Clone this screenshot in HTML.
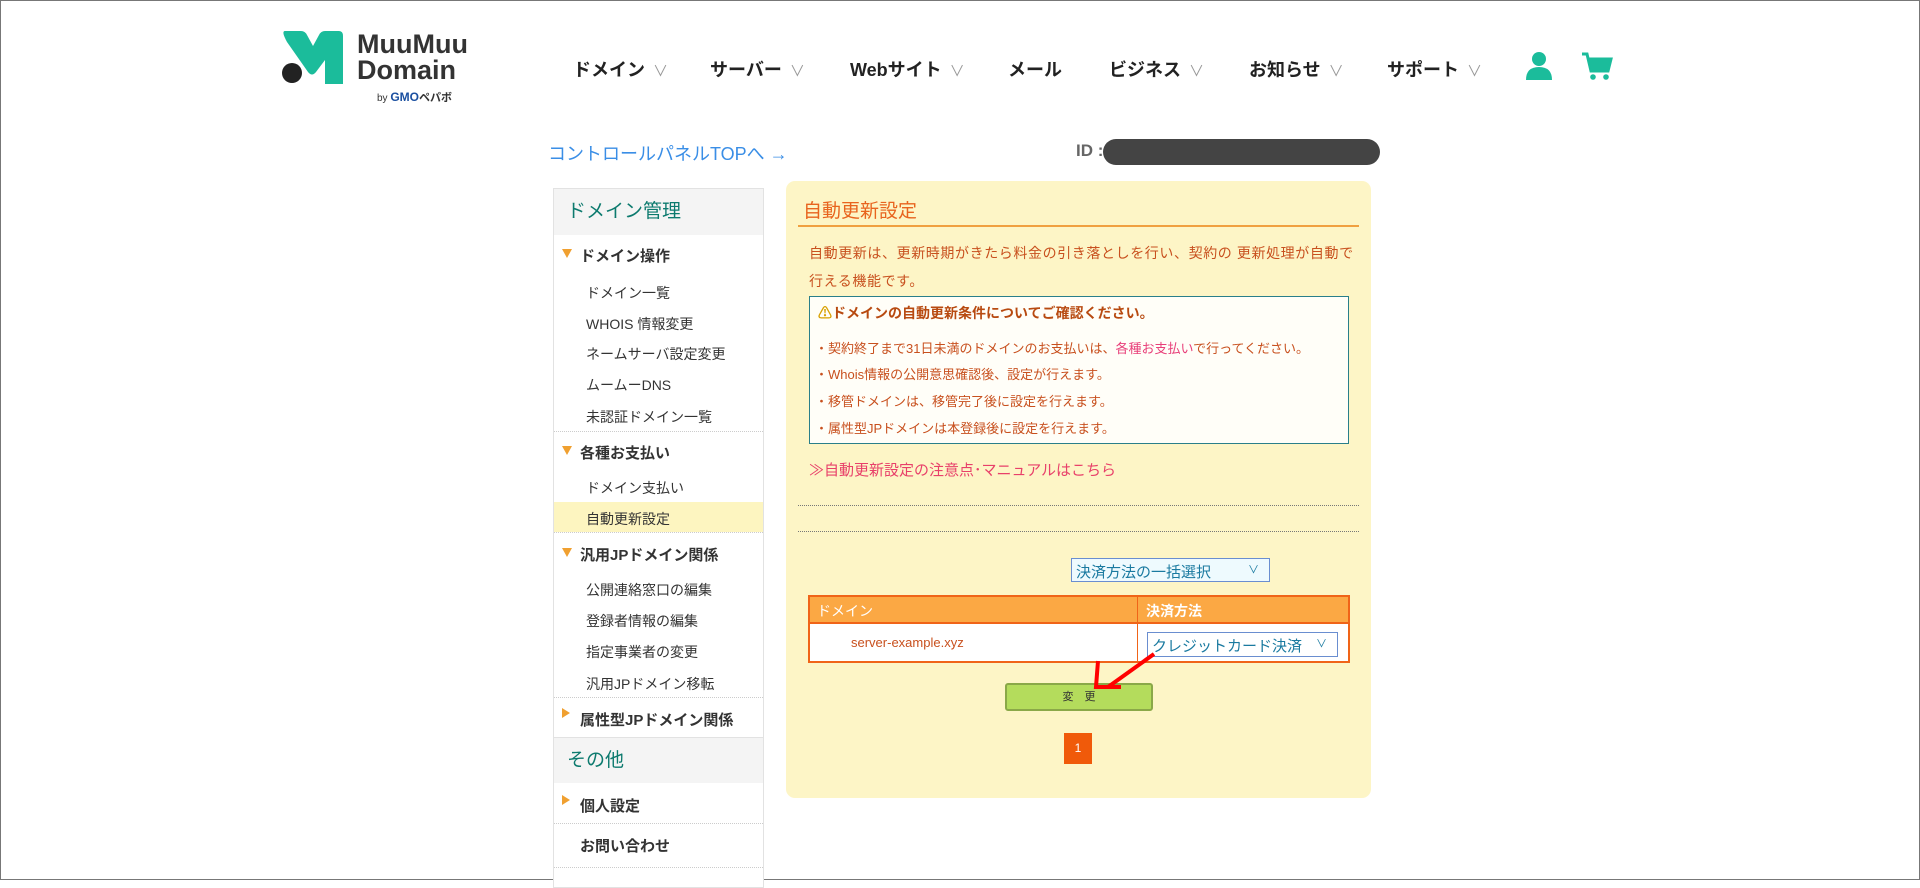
<!DOCTYPE html>
<html><head><meta charset="utf-8"><style>
*{margin:0;padding:0;box-sizing:border-box}
body{width:1920px;height:880px;background:#fff;font-family:"Liberation Sans","Noto Sans CJK JP",sans-serif;position:relative;overflow:hidden;border:1px solid #777}
.a{position:absolute;white-space:nowrap}
.nav{top:55px;font-size:18px;font-weight:bold;color:#222}
.nav i{font-style:normal;color:#999;font-weight:normal;font-size:15px;margin-left:8px}
.sb{position:absolute;left:552px;top:187px;width:211px;height:700px;border:1px solid #e2e2e2;background:#fff}
.sh{position:absolute;left:0;width:209px;background:#f4f4f4;color:#0c7a6e;font-size:19px;padding-left:13px}
.st{position:absolute;left:26px;font-size:15px;font-weight:bold;color:#333}
.tri{position:absolute;left:8px;width:0;height:0}
.si{position:absolute;left:32px;font-size:14px;color:#333}
.sep{position:absolute;left:0;width:209px;border-top:1px dotted #ccc}
.p{font-size:13px;color:#c8501e}
</style></head><body>
<svg class="a" style="left:278px;top:29px" width="66" height="56" viewBox="0 0 66 56"><path d="M6 1 L22 1 Q26 1 28 5 L34 16 L40 5 Q42 1 46 1 L60 1 Q64 1 64 6 L64 54 L46 54 L46 30 L37 42 Q33 47 29 42 L8 12 Q2 1 6 1Z" fill="#1bbc9b"/><circle cx="13" cy="43" r="10" fill="#222"/></svg>
<div class="a" style="left:356px;top:30px;font-size:27px;font-weight:bold;color:#333;line-height:26px">MuuMuu<br>Domain</div>
<div class="a" style="left:376px;top:88px;font-size:10px;color:#333">by <b style="color:#1a4fa0;font-size:12px">GMO</b><b style="font-size:11px">ペパボ</b></div>
<div class="a nav" style="left:572px">ドメイン<i>∨</i></div>
<div class="a nav" style="left:709px">サーバー<i>∨</i></div>
<div class="a nav" style="left:849px">Webサイト<i>∨</i></div>
<div class="a nav" style="left:1007px">メール</div>
<div class="a nav" style="left:1108px">ビジネス<i>∨</i></div>
<div class="a nav" style="left:1248px">お知らせ<i>∨</i></div>
<div class="a nav" style="left:1386px">サポート<i>∨</i></div>
<svg class="a" style="left:1524px;top:50px" width="28" height="30" viewBox="0 0 28 30"><circle cx="14" cy="8" r="7" fill="#1bbc9b"/><path d="M1 29 Q1 16 14 16 Q27 16 27 29Z" fill="#1bbc9b"/></svg>
<svg class="a" style="left:1580px;top:50px" width="32" height="32" viewBox="0 0 32 32"><path d="M1 3 L6 3 L10 20 L27 20 L30 8 L8 8" fill="none" stroke="#1bbc9b" stroke-width="3"/><path d="M8 9 L29 9 L26 19 L10 19Z" fill="#1bbc9b"/><circle cx="12" cy="26" r="2.8" fill="#1bbc9b"/><circle cx="25" cy="26" r="2.8" fill="#1bbc9b"/></svg>
<div class="a" style="left:547px;top:139px;font-size:18px;color:#3a8ee6">コントロールパネルTOPへ →</div>
<div class="a" style="left:1075px;top:140px;font-size:17px;font-weight:bold;color:#666">ID :</div>
<div class="a" style="left:1102px;top:138px;width:277px;height:26px;border-radius:13px;background:#444"></div>

<div class="sb">
<div class="sh" style="top:0;height:46px;line-height:46px">ドメイン管理</div>
<div class="tri" style="top:60px;border-left:5px solid transparent;border-right:5px solid transparent;border-top:9px solid #f0a030"></div>
<div class="st" style="top:56px">ドメイン操作</div>
<div class="si" style="top:94px">ドメイン一覧</div>
<div class="si" style="top:125px">WHOIS 情報変更</div>
<div class="si" style="top:155px">ネームサーバ設定変更</div>
<div class="si" style="top:186px">ムームーDNS</div>
<div class="si" style="top:218px">未認証ドメイン一覧</div>
<div class="sep" style="top:242px"></div>
<div class="tri" style="top:257px;border-left:5px solid transparent;border-right:5px solid transparent;border-top:9px solid #f0a030"></div>
<div class="st" style="top:253px">各種お支払い</div>
<div class="si" style="top:289px">ドメイン支払い</div>
<div style="position:absolute;left:0;top:313px;width:209px;height:30px;background:#fdf5c0"></div>
<div class="si" style="top:320px">自動更新設定</div>
<div class="sep" style="top:343px"></div>
<div class="tri" style="top:359px;border-left:5px solid transparent;border-right:5px solid transparent;border-top:9px solid #f0a030"></div>
<div class="st" style="top:355px">汎用JPドメイン関係</div>
<div class="si" style="top:391px">公開連絡窓口の編集</div>
<div class="si" style="top:422px">登録者情報の編集</div>
<div class="si" style="top:453px">指定事業者の変更</div>
<div class="si" style="top:485px">汎用JPドメイン移転</div>
<div class="sep" style="top:508px"></div>
<div class="tri" style="top:519px;border-top:5px solid transparent;border-bottom:5px solid transparent;border-left:8px solid #f0a030"></div>
<div class="st" style="top:520px">属性型JPドメイン関係</div>
<div class="sh" style="top:548px;height:46px;line-height:46px;border-top:1px solid #e2e2e2">その他</div>
<div class="tri" style="top:606px;border-top:5px solid transparent;border-bottom:5px solid transparent;border-left:8px solid #f0a030"></div>
<div class="st" style="top:606px">個人設定</div>
<div class="sep" style="top:634px"></div>
<div class="st" style="top:646px">お問い合わせ</div>
<div class="sep" style="top:678px"></div>
</div>

<div class="a" style="left:785px;top:180px;width:585px;height:617px;background:#fdf5c6;border-radius:9px"></div>
<div class="a" style="left:802px;top:195px;font-size:19px;color:#e8641e">自動更新設定</div>
<div class="a" style="left:797px;top:224px;width:561px;height:2px;background:#f0a040"></div>
<div class="a p" style="left:808px;top:238px;line-height:28px;white-space:normal;width:545px;font-size:14px;letter-spacing:0.6px">自動更新は、更新時期がきたら料金の引き落としを行い、契約の 更新処理が自動で行える機能です。</div>
<div class="a" style="left:808px;top:295px;width:540px;height:148px;border:1px solid #2a7f8a;background:#fffef8"></div>
<div class="a" style="left:817px;top:302px;font-size:14px;font-weight:bold;color:#b84a10"><span style="color:#d8a000">⚠</span>ドメインの自動更新条件についてご確認ください。</div>
<div class="a p" style="left:814px;top:337px">・契約終了まで31日未満のドメインのお支払いは、<span style="color:#e8407a">各種お支払い</span>で行ってください。</div>
<div class="a p" style="left:814px;top:363px">・Whois情報の公開意思確認後、設定が行えます。</div>
<div class="a p" style="left:814px;top:390px">・移管ドメインは、移管完了後に設定を行えます。</div>
<div class="a p" style="left:814px;top:417px">・属性型JPドメインは本登録後に設定を行えます。</div>
<div class="a" style="left:808px;top:458px;font-size:15px;color:#e8406a">≫自動更新設定の注意点･マニュアルはこちら</div>
<div class="a" style="left:797px;top:504px;width:561px;border-top:1px dotted #777"></div>
<div class="a" style="left:797px;top:530px;width:561px;border-top:1px dotted #777"></div>
<div class="a" style="left:1070px;top:557px;width:199px;height:24px;border:1px solid #6a8ed0;background:#eefafe;font-size:15px;color:#1a7aa0;padding:2px 4px">決済方法の一括選択<span style="position:absolute;right:10px;font-size:11px">∨</span></div>
<div class="a" style="left:807px;top:594px;width:542px;height:68px;border:2px solid #f06418;background:#fff"></div>
<div class="a" style="left:809px;top:596px;width:538px;height:27px;background:#fba844;border-bottom:2px solid #f06418"></div>
<div class="a" style="left:1136px;top:596px;width:1px;height:64px;background:#f06418"></div>
<div class="a" style="left:816px;top:600px;font-size:14px;color:#fff">ドメイン</div>
<div class="a" style="left:1145px;top:600px;font-size:14px;font-weight:bold;color:#fff">決済方法</div>
<div class="a" style="left:850px;top:634px;font-size:13px;color:#c8501e">server-example.xyz</div>
<div class="a" style="left:1146px;top:631px;width:191px;height:25px;border:1px solid #6a8ed0;background:#fff;font-size:15px;color:#1a7aa0;padding:2px 4px">クレジットカード決済<span style="position:absolute;right:10px;font-size:11px">∨</span></div>
<div class="a" style="left:1004px;top:682px;width:148px;height:28px;background:#b4dc5c;border:2px solid #8aa848;border-radius:3px;font-size:11px;text-align:center;line-height:24px;color:#333">変　更</div>
<svg class="a" style="left:1085px;top:650px" width="70" height="50" viewBox="0 0 70 50"><path d="M68 3 L22 36" stroke="#f00" stroke-width="4"/><path d="M12 10 L10 36 L35 36" fill="none" stroke="#f00" stroke-width="4"/></svg>
<div class="a" style="left:1063px;top:732px;width:28px;height:31px;background:#f05a0a;color:#fff;font-size:12px;text-align:center;line-height:31px">1</div>
</body></html>
